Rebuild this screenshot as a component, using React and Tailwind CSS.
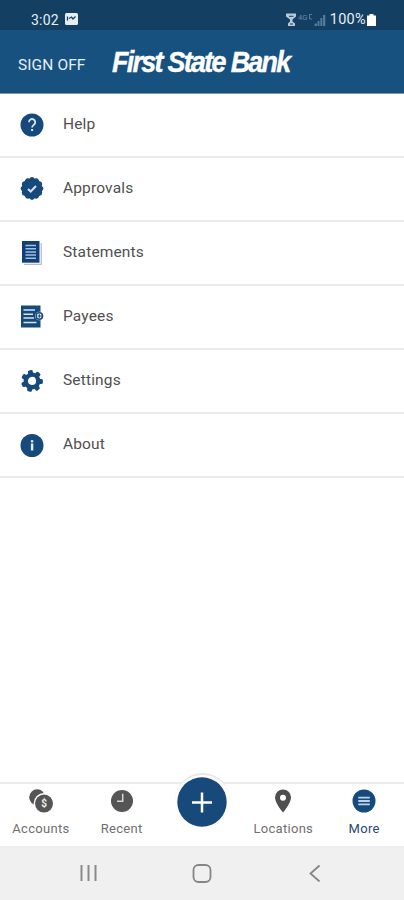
// src/App.jsx
import React from "react";

const HelpIcon = () => (
  <svg viewBox="0 0 24 24" className="w-6 h-6">
    <circle cx="12" cy="12" r="11.5" fill="#16497c" />
    <path d="M9 9.200a3.100 3.100 0 1 1 5 2.400c-1.100.9-1.900 1.400-1.900 2.900" fill="none" stroke="#dbe8f2" strokeWidth="1.800" />
    <rect x="11.100" y="16" width="2" height="2" fill="#dbe8f2" />
  </svg>
);

const ApprovalsIcon = () => (
  <svg viewBox="0 0 24 24" className="w-6 h-6" fill="#16497c">
    <circle cx="12" cy="11.500" r="10.500" />
    {Array.from({ length: 12 }, (_, i) => (
      <circle key={i} cx="12" cy="2.400" r="2.300" transform={`rotate(${i * 30} 12 11.5)`} />
    ))}
    <path d="M8 12l2.700 2.500 5.300-5.500" fill="none" stroke="#d3e2ee" strokeWidth="2" />
  </svg>
);

const StatementsIcon = () => (
  <svg viewBox="0 0 24 24" className="w-6 h-6">
    <path d="M21.200 2v21.300H4" fill="none" stroke="#b3b9c6" strokeWidth="1.200" />
    <rect x="2" y="0" width="17.500" height="21.700" fill="#123f7a" />
    <path d="M5.500 4.500h10.500M5.500 7.700h10.500M5.500 10.900h10.500M5.500 14.100h10.500M5.500 17.300h10.500" stroke="#9fc4dc" strokeWidth="1.500" />
  </svg>
);

const PayeesIcon = () => (
  <svg viewBox="0 0 24 24" className="w-6 h-6">
    <path d="M1 .5h19.500v22H1z" fill="#16497c" />
    <path d="M3.500 5h11.500M3.500 9.200h9.500M3.500 13h10.500M3.500 17.500h13" stroke="#d5e4ef" strokeWidth="1.600" />
    <circle cx="19.300" cy="11" r="4.300" fill="#fff" />
    <circle cx="19.300" cy="11" r="3.200" fill="none" stroke="#16497c" strokeWidth="1.500" />
    <path d="M17.500 11h5.800M19.300 9.300v3.400" stroke="#16497c" strokeWidth="1.200" />
  </svg>
);

const SettingsIcon = () => (
  <svg viewBox="0 0 24 24" className="w-6 h-6">
    <g transform="rotate(-10 12 12)">
      <circle cx="12" cy="12" r="6.300" fill="none" stroke="#16497c" strokeWidth="4.400" />
      {Array.from({ length: 7 }, (_, i) => (
        <rect key={i} x="9.500" y="1.100" width="5" height="4.500" rx="1.600" fill="#16497c" transform={`rotate(${(i * 360) / 7} 12 12)`} />
      ))}
    </g>
  </svg>
);

const AboutIcon = () => (
  <svg viewBox="0 0 24 24" className="w-6 h-6">
    <circle cx="12" cy="12.500" r="11.500" fill="#16497c" />
    <rect x="10.900" y="7.200" width="2.400" height="2.200" fill="#e2edf5" />
    <path d="M10.900 10.500h2.400v7h-2.400z" fill="#e2edf5" />
  </svg>
);

const AccountsIcon = () => (
  <svg viewBox="0 0 24 24" className="w-6 h-6">
    <circle cx="8.200" cy="8.300" r="8" fill="#555" />
    <circle cx="15" cy="14.300" r="10.300" fill="#fff" />
    <circle cx="15" cy="14.600" r="9" fill="#555" />
    <text x="15" y="18.400" textAnchor="middle" fontSize="10" fontWeight="700" fill="#eee">$</text>
  </svg>
);

const RecentIcon = () => (
  <svg viewBox="0 0 24 24" className="w-6 h-6">
    <circle cx="12" cy="12" r="11" fill="#555" />
    <path d="M12.700 4.800v7.400H7" fill="none" stroke="#d8d8d8" strokeWidth="1.500" />
  </svg>
);

const LocationIcon = () => (
  <svg viewBox="0 0 24 24" className="w-6 h-6">
    <path d="M12 .5a8 8 0 0 0-8 8c0 5.700 8 15 8 15s8-9.300 8-15a8 8 0 0 0-8-8zm0 5.200a3 3 0 1 1 0 6 3 3 0 0 1 0-6z" fill="#4e4e4e" />
  </svg>
);

const MoreIcon = () => (
  <svg viewBox="0 0 24 24" className="w-6 h-6">
    <circle cx="12" cy="12" r="11.500" fill="#16497c" />
    <path d="M6.300 8.700h11.500M6.300 12h11.500M6.300 15.300h11.500" stroke="#bcd3e5" strokeWidth="1.800" />
  </svg>
);

const menuItems = [
  { label: "Help", Icon: HelpIcon },
  { label: "Approvals", Icon: ApprovalsIcon },
  { label: "Statements", Icon: StatementsIcon },
  { label: "Payees", Icon: PayeesIcon },
  { label: "Settings", Icon: SettingsIcon },
  { label: "About", Icon: AboutIcon },
];

const StatusBar = () => (
  <div className="h-[30px] bg-[#133f63] text-[#e6eef4] flex items-end justify-between pl-[31px] pr-[28px] pb-[1px]">
    <div className="flex items-center gap-1.5">
      <span className="text-[14px] leading-[18px] tracking-[0.200px]">3:02</span>
      <svg viewBox="0 0 13 12" className="w-[13px] h-3 -mt-[2px]">
        <rect width="13" height="12" rx="1.500" fill="#e6eef4" />
        <path d="M2.500 7.500V3.500M4 5.500l2.500-1.500 1.500 2 2.500-2.500" fill="none" stroke="#133f63" strokeWidth="1.300" />
      </svg>
    </div>
    <div className="flex items-center">
      <svg viewBox="0 0 40 16" className="w-10 h-4 mr-[4px]">
        <path d="M0 1.500h10v3L6.500 7.500v2l2.500 2V14H2v-2.500l2-2v-2L0 4.500z" fill="#b9c9d5" />
        <path d="M3 4.300h4.500M4 12h3" stroke="#133f63" strokeWidth="1" />
        <text x="12" y="7.500" fontSize="7.500" fill="#6c8ba3">4G</text>
        <path d="M26 2.500h-2.500v4.500H26" fill="none" stroke="#6c8ba3" strokeWidth=".8" />
        <path d="M28.500 14v-2.500h2.500V14zM31.500 14V9h2v5zM34.300 14V6h2v8zM37 14V3h2.300v11z" fill="#557a96" />
      </svg>
      <span className="text-[14.500px] leading-[18px] tracking-[0.300px]">100%</span>
      <svg viewBox="0 0 9 12" className="w-[9px] h-3 ml-px -mt-px">
        <path d="M2.500 0h4v1.500H9V12H0V1.500h2.500z" fill="#fff" />
      </svg>
    </div>
  </div>
);

const Header = () => (
  <header className="h-[64px] bg-[#17517f] border-b border-[#7899b3] flex items-center pl-[18px]">
    <button className="w-[94px] shrink-0 text-left text-[15.500px] leading-5 tracking-[0.100px] text-[#e6eff6] pt-[6px] whitespace-nowrap">SIGN OFF</button>
    <h1 className="font-['Liberation_Sans',sans-serif] font-bold italic text-[29px] leading-8 tracking-[-1.800px] text-white whitespace-nowrap origin-left scale-x-[0.925] [-webkit-text-stroke:0.400px_white]">
      First State Bank
    </h1>
  </header>
);

const NavItem = ({ label, active, children }) => (
  <button className={`flex flex-col items-center pt-[5px] pl-px ${active ? "text-[#284777]" : "text-[#707070]"}`}>
    {children}
    <span className="mt-[8px] text-[13px] leading-4 tracking-[0.300px]">{label}</span>
  </button>
);

const BottomNav = () => (
  <nav className="h-[64px] border-t-2 border-[#ececec] bg-white grid grid-cols-5">
    <NavItem label="Accounts"><AccountsIcon /></NavItem>
    <NavItem label="Recent"><RecentIcon /></NavItem>
    <div className="flex justify-center items-start">
      <button className="-mt-[11px] ml-px w-[55px] h-[55px] shrink-0 rounded-full bg-white border-t-2 border-[#e8e8e8] flex items-center justify-center">
        <svg viewBox="0 0 50 50" className="w-[50px] h-[50px]">
          <circle cx="25" cy="25" r="24.700" fill="#17497b" />
          <path d="M25 15.500v20M15 25.500h20" stroke="#fff" strokeWidth="2.500" />
        </svg>
      </button>
    </div>
    <NavItem label="Locations"><LocationIcon /></NavItem>
    <NavItem label="More" active><MoreIcon /></NavItem>
  </nav>
);

const SystemBar = () => (
  <div className="h-[54px] bg-[#f0f0f0] flex items-center justify-between pl-[79px] pr-[80px]">
    <svg viewBox="0 0 18 18" className="w-[18px] h-[18px]">
      <path d="M2.500 1v16M9.500 1v16M16.500 1v16" stroke="#8a8a8a" strokeWidth="2" />
    </svg>
    <svg viewBox="0 0 20 20" className="w-5 h-5">
      <rect x="1.500" y="2" width="17" height="17" rx="5" fill="none" stroke="#858585" strokeWidth="1.800" />
    </svg>
    <svg viewBox="0 0 18 18" className="w-[18px] h-[18px]">
      <path d="M13.500 1.500L4.500 9.500l9 8" fill="none" stroke="#858585" strokeWidth="1.800" />
    </svg>
  </div>
);

const App = () => {
  return (
    <div className="w-full h-screen flex flex-col bg-white overflow-hidden font-[Roboto,sans-serif]">
      <StatusBar />
      <Header />

      {/* Menu */}
      <main className="flex-1">
        {menuItems.map(({ label, Icon }) => (
          <div key={label} className="h-16 border-b-2 border-[#ebebeb] flex items-center pl-5">
            <Icon />
            <span className="ml-[19px] -mt-[3px] text-[15.500px] leading-5 tracking-[0.150px] text-[#505050]">{label}</span>
          </div>
        ))}
      </main>

      <BottomNav />
      <SystemBar />
    </div>
  );
};

export default App;
